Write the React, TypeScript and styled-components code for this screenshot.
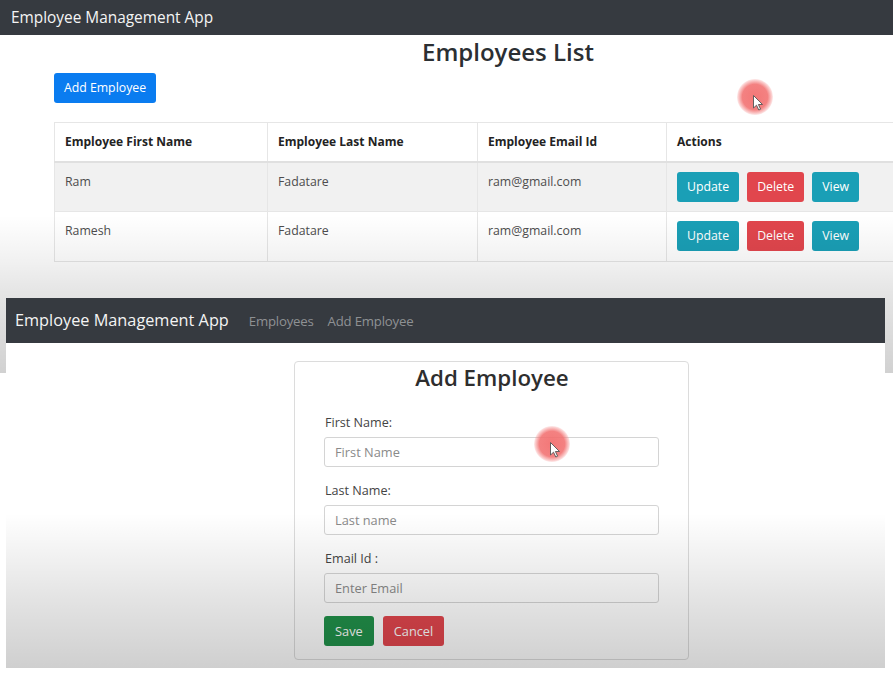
import React from "react";
import styled, { createGlobalStyle } from "styled-components";

const Global = createGlobalStyle`
  html, body { margin: 0; padding: 0; background: #fff; }
  body {
    font-family: "Open Sans", "Noto Sans", "Liberation Sans", sans-serif;
    width: 893px; height: 675px; overflow: hidden;
  }
  * { box-sizing: border-box; }
`;

const Page = styled.div`
  width: 893px;
  height: 675px;
  overflow: hidden;
  background: #fff;
`;

const Shot = styled.section<{ $fade: string }>`
  position: relative;
  overflow: hidden;
  background: #fff;
  &::after {
    content: "";
    position: absolute;
    inset: 0;
    pointer-events: none;
    background: ${(p) => p.$fade};
  }
`;

const ListShot = styled(Shot)`
  width: 893px;
  height: 373px;
`;

const FormShot = styled(Shot)`
  width: 879px;
  height: 370px;
  margin: -75px 0 0 6px;
  z-index: 1;
`;

const Navbar = styled.nav<{ $h: number; $pad: number }>`
  height: ${(p) => p.$h}px;
  background: #363a40;
  display: flex;
  align-items: center;
  padding-left: ${(p) => p.$pad}px;
`;

const Brand = styled.span<{ $size: number }>`
  color: #f4f4f4;
  font-size: ${(p) => p.$size}px;
  line-height: 1;
`;

const NavLinks = styled.div`
  display: flex;
  gap: 14px;
  margin-left: 20px;
`;

const NavLink = styled.span`
  color: rgba(255, 255, 255, 0.45);
  font-size: 13.2px;
  letter-spacing: -0.2px;
`;

const ListContent = styled.div`
  width: 908px;
  margin-left: 54px;
  padding-top: 2px;
  display: flex;
  flex-direction: column;
  align-items: flex-start;
`;

const Title = styled.h2`
  align-self: stretch;
  margin: 0;
  text-align: center;
  font-size: 24px;
  line-height: 30px;
  font-weight: 600;
  color: #2b2f33;
`;

const Btn = styled.button<{ $bg: string }>`
  height: 30px;
  padding: 0 10px;
  border: none;
  border-radius: 3px;
  background: ${(p) => p.$bg};
  color: #fff;
  font-family: inherit;
  font-size: 12.3px;
  line-height: 30px;
  cursor: pointer;
`;

const AddBtn = styled(Btn)`
  margin-top: 6px;
  width: 102px;
  padding: 0;
`;

const Table = styled.table`
  margin-top: 19px;
  width: 908px;
  table-layout: fixed;
  border-collapse: collapse;
  border: 1px solid #e6e6e6;
  font-size: 12.3px;
`;

const Th = styled.th`
  height: 39px;
  padding: 0 10px;
  text-align: left;
  font-size: 12px;
  font-weight: 700;
  color: #232323;
  border-left: 1px solid #e6e6e6;
  border-bottom: 2px solid #e0e0e0;
`;

const Tr = styled.tr<{ $striped: boolean }>`
  background: ${(p) => (p.$striped ? "#f1f1f1" : "#fff")};
`;

const Td = styled.td`
  height: 50px;
  padding: 9px 10px 0;
  vertical-align: top;
  line-height: 20px;
  color: #4d4d4d;
  border-left: 1px solid #e6e6e6;
  border-top: 1px solid #e6e6e6;
`;

const Actions = styled.div`
  display: flex;
  gap: 8px;
`;

const Card = styled.div`
  width: 395px;
  height: 299px;
  margin: 18px 0 0 288px;
  padding: 2px 29px 0 30px;
  border: 1px solid #dcdcdc;
  border-radius: 4px;
  display: flex;
  flex-direction: column;
`;

const CardTitle = styled.h3`
  margin: 0 0 22px;
  text-align: center;
  font-size: 22.3px;
  line-height: 28px;
  font-weight: 600;
  color: #2e2e2e;
`;

const Field = styled.div`
  display: flex;
  flex-direction: column;
  gap: 5px;
  margin-bottom: 15px;
  &:nth-of-type(3) { margin-bottom: 13px; }
`;

const Label = styled.label`
  font-size: 12.6px;
  line-height: 18px;
  color: #444;
`;

const Input = styled.input`
  height: 30px;
  width: 335px;
  margin-left: -1px;
  padding: 0 10px;
  border: 1px solid #d4d4d4;
  border-radius: 3px;
  font-family: inherit;
  font-size: 12.8px;
  color: #333;
  background: #fff;
  &::placeholder { color: #8a8a8a; }
`;

const FormButtons = styled.div`
  display: flex;
  gap: 9px;
  margin-left: -1px;
`;

const FormBtn = styled(Btn)`
  font-size: 12.8px;
  padding: 0 11px;
`;

const Pointer = styled.div<{ $x: number; $y: number }>`
  position: absolute;
  left: ${(p) => p.$x}px;
  top: ${(p) => p.$y}px;
  width: 36px;
  height: 36px;
  pointer-events: none;
  z-index: 2;
`;

const Glow = styled.div`
  position: absolute;
  inset: 0;
  border-radius: 50%;
  background: radial-gradient(circle, rgba(242, 108, 108, 0.92) 0%, rgba(242, 112, 112, 0.88) 50%, rgba(245, 140, 140, 0.4) 66%, rgba(245, 150, 150, 0) 74%);
`;

const Arrow = styled.svg`
  position: absolute;
  left: 16px;
  top: 16px;
`;

const Cursor = ({ x, y }: { x: number; y: number }) => (
  <Pointer $x={x} $y={y}>
    <Glow />
    <Arrow width="11" height="16" viewBox="0 0 11 16">
      <path d="M0.5 0.5 L0.5 13 L3.5 10.2 L5.8 15 L7.6 14.2 L5.4 9.5 L9.5 9.5 Z" fill="#fff" stroke="#555" strokeWidth="0.9" strokeLinejoin="round" />
    </Arrow>
  </Pointer>
);

const employees = [
  { first: "Ram", last: "Fadatare", email: "ram@gmail.com" },
  { first: "Ramesh", last: "Fadatare", email: "ram@gmail.com" },
];

const INFO = "#1a9fb6";
const DANGER = "#e1464d";

export default function App() {
  return (
    <Page>
      <Global />
      <ListShot $fade="linear-gradient(to bottom, rgba(0,0,0,0) 0px, rgba(0,0,0,0) 215px, rgba(0,0,0,0.05) 258px, rgba(0,0,0,0.1) 292px, rgba(0,0,0,0.18) 373px)">
        <Navbar $h={35} $pad={11}>
          <Brand $size={15.4}>Employee Management App</Brand>
        </Navbar>
        <ListContent>
          <Title>Employees List</Title>
          <AddBtn $bg="#0a7cf0">Add Employee</AddBtn>
          <Table>
            <colgroup>
              <col style={{ width: 213 }} />
              <col style={{ width: 210 }} />
              <col style={{ width: 189 }} />
              <col style={{ width: 296 }} />
            </colgroup>
            <thead>
              <tr>
                <Th>Employee First Name</Th>
                <Th>Employee Last Name</Th>
                <Th>Employee Email Id</Th>
                <Th>Actions</Th>
              </tr>
            </thead>
            <tbody>
              {employees.map((e, i) => (
                <Tr key={i} $striped={i % 2 === 0}>
                  <Td>{e.first}</Td>
                  <Td>{e.last}</Td>
                  <Td>{e.email}</Td>
                  <Td>
                    <Actions>
                      <Btn $bg={INFO}>Update</Btn>
                      <Btn $bg={DANGER}>Delete</Btn>
                      <Btn $bg={INFO}>View</Btn>
                    </Actions>
                  </Td>
                </Tr>
              ))}
            </tbody>
          </Table>
        </ListContent>
        <Cursor x={737} y={79} />
      </ListShot>

      <FormShot $fade="linear-gradient(to bottom, rgba(0,0,0,0) 0px, rgba(0,0,0,0) 215px, rgba(0,0,0,0.06) 262px, rgba(0,0,0,0.11) 302px, rgba(0,0,0,0.19) 370px)">
        <Navbar $h={45} $pad={9}>
          <Brand $size={16.3}>Employee Management App</Brand>
          <NavLinks>
            <NavLink>Employees</NavLink>
            <NavLink>Add Employee</NavLink>
          </NavLinks>
        </Navbar>
        <Card>
          <CardTitle>Add Employee</CardTitle>
          <Field>
            <Label>First Name:</Label>
            <Input placeholder="First Name" />
          </Field>
          <Field>
            <Label>Last Name:</Label>
            <Input placeholder="Last name" />
          </Field>
          <Field>
            <Label>Email Id :</Label>
            <Input placeholder="Enter Email" />
          </Field>
          <FormButtons>
            <FormBtn $bg="#21914a">Save</FormBtn>
            <FormBtn $bg={DANGER}>Cancel</FormBtn>
          </FormButtons>
        </Card>
        <Cursor x={528} y={128} />
      </FormShot>
    </Page>
  );
}
